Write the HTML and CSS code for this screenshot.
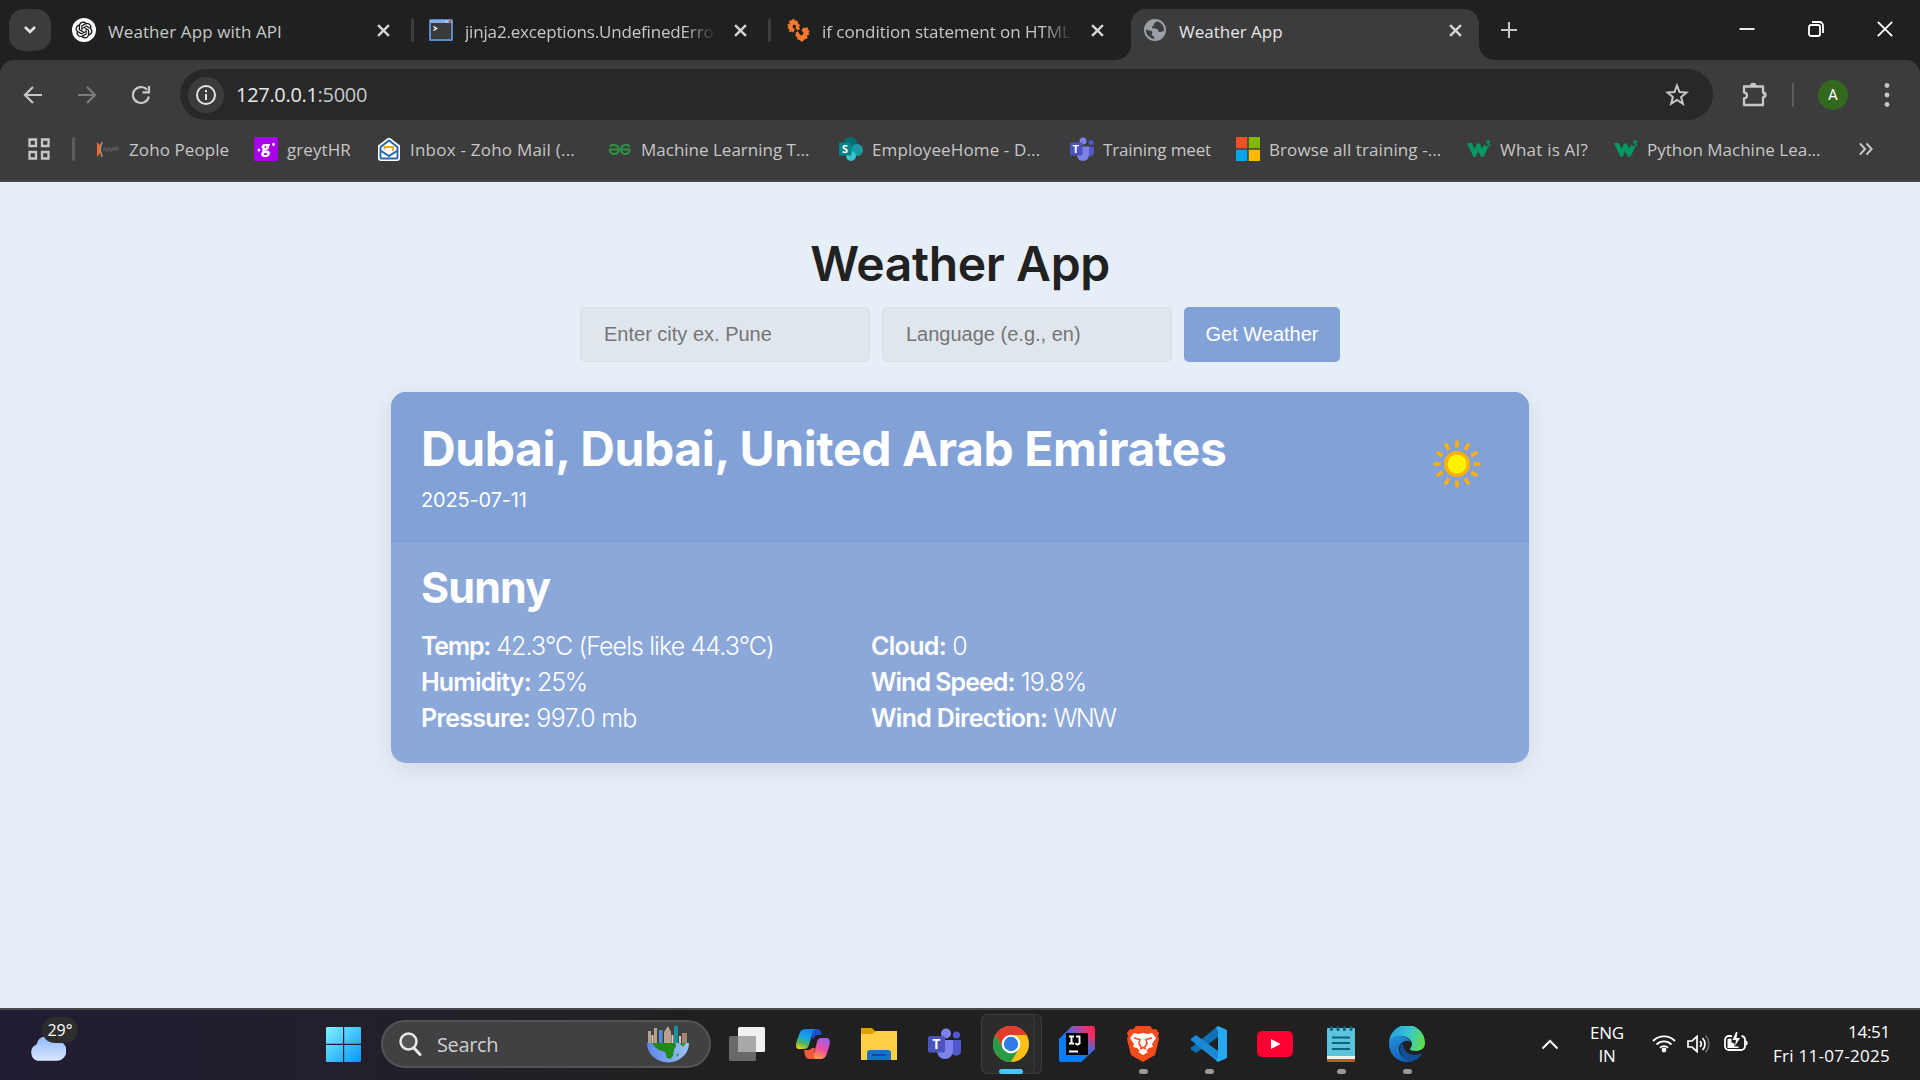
FILE: index.html
```html
<!DOCTYPE html>
<html lang="en">
<head>
<meta charset="utf-8">
<title>Weather App</title>
<link rel="stylesheet" href="styles.css">
</head>
<body>
<div class="tabstrip">
  <div class="tab-search"><svg width="16" height="16" viewBox="0 0 16 16"><path d="M3 5l5 5 5-5" fill="none" stroke="#e3e3e3" stroke-width="2.6"/></svg></div>
  <div class="tab">
    <svg class="fav" viewBox="0 0 24 24"><circle cx="12" cy="12" r="12" fill="#fff"/><path transform="translate(3.600 3.600) scale(.7)" fill="#111" stroke="#111" stroke-width=".3" d="M22.2819 9.8211a5.9847 5.9847 0 0 0-.5157-4.9108 6.0462 6.0462 0 0 0-6.5098-2.9A6.0651 6.0651 0 0 0 4.9807 4.1818a5.9847 5.9847 0 0 0-3.9977 2.9 6.0462 6.0462 0 0 0 .7427 7.0966 5.98 5.98 0 0 0 .511 4.9107 6.051 6.051 0 0 0 6.5146 2.9001A5.9847 5.9847 0 0 0 13.2599 24a6.0557 6.0557 0 0 0 5.7718-4.2058 5.9894 5.9894 0 0 0 3.9977-2.9001 6.0557 6.0557 0 0 0-.7475-7.0729zm-9.022 12.6081a4.4755 4.4755 0 0 1-2.8764-1.0408l.1419-.0804 4.7783-2.7582a.7948.7948 0 0 0 .3927-.6813v-6.7369l2.02 1.1686a.071.071 0 0 1 .038.052v5.5826a4.504 4.504 0 0 1-4.4945 4.4944zm-9.6607-4.1254a4.4708 4.4708 0 0 1-.5346-3.0137l.142.0852 4.783 2.7582a.7712.7712 0 0 0 .7806 0l5.8428-3.3685v2.3324a.0804.0804 0 0 1-.0332.0615L9.74 19.9502a4.4992 4.4992 0 0 1-6.1408-1.6464zM2.3408 7.8956a4.485 4.485 0 0 1 2.3655-1.9728V11.6a.7664.7664 0 0 0 .3879.6765l5.8144 3.3543-2.0201 1.1685a.0757.0757 0 0 1-.071 0l-4.8303-2.7865A4.504 4.504 0 0 1 2.3408 7.872zm16.5963 3.8558L13.1038 8.364 15.1192 7.2a.0757.0757 0 0 1 .071 0l4.8303 2.7913a4.4944 4.4944 0 0 1-.6765 8.1042v-5.6772a.79.79 0 0 0-.407-.667zm2.0107-3.0231l-.142-.0852-4.7735-2.7818a.7759.7759 0 0 0-.7854 0L9.409 9.2297V6.8974a.0662.0662 0 0 1 .0284-.0615l4.8303-2.7866a4.4992 4.4992 0 0 1 6.6802 4.66zM8.3065 12.863l-2.02-1.1638a.0804.0804 0 0 1-.038-.0567V6.0742a4.4992 4.4992 0 0 1 7.3757-3.4537l-.142.0805L8.704 5.459a.7948.7948 0 0 0-.3927.6813zm1.0976-2.3654l2.602-1.4998 2.6069 1.4998v2.9994l-2.5974 1.4997-2.6067-1.4997Z"/></svg>
    <span class="tab-title"><span class="t1">Weather App with API</span></span>
    <svg class="x" viewBox="0 0 12 12"><path d="M1 1l10 10M11 1L1 11"/></svg>
  </div>
  <div class="tab">
    <svg class="fav" viewBox="0 0 24 24"><rect y="1" width="24" height="22" rx="1.500" fill="#5d88c9"/><rect x="1" y="2" width="22" height="3" fill="#86aee6"/><circle cx="21" cy="3.500" r="1.200" fill="#e3382c"/><circle cx="17.500" cy="3.500" r="1" fill="#d8e6fa"/><rect x="2" y="5" width="20" height="16" fill="#3a3a3a"/><path d="M4.500 8.500l3 2-3 2" fill="none" stroke="#fff" stroke-width="1.500"/></svg>
    <span class="tab-title fade"><span class="t2">jinja2.exceptions.UndefinedErro</span></span>
    <svg class="x" viewBox="0 0 12 12"><path d="M1 1l10 10M11 1L1 11"/></svg>
  </div>
  <div class="tab last">
    <svg class="fav" viewBox="0 0 24 24" fill="#f8792b"><path d="M6 2l1.500-1.500L9 2.500l2.500.5.5 2.500 2 1.500-1 2 1 2-2.500 1.500-2-2.500.5-2.500L8 6.500 6.500 8l.5 2 2 1.500L7 14.500l-1.500-1-2.500.5.5-2.500-2-1.500 1-1.500L1 6.500 3.500 6l-.5-3z"/><path d="M17 23l-1.500 1-1.500-2-2.500-.5-.5-2.500-2-1.500 1-1.500-.5-1.500 2.500-1 1.500 2.500 1.500 1.500 2-1 .5-2-2-2 2-3 2 .5 2-1 .5 2.500 1.500 1.500-1 1.500 1 2-2.500 1 .5 3-2.500.5z"/></svg>
    <span class="tab-title fade"><span class="t3">if condition statement on HTML</span></span>
    <svg class="x" viewBox="0 0 12 12"><path d="M1 1l10 10M11 1L1 11"/></svg>
  </div>
  <div class="tab active">
    <svg class="fav" viewBox="0 0 24 24"><circle cx="12" cy="12" r="11" fill="#9aa0a6"/><path d="M14.500 3.200c-1 1-3.500 1-3.500 3s-2 1.800-2.200 3.300c0 1.500 3.700.8 5.200 1.500 2 1 .5 2.500 2.500 3 1.500.3 2.500-1 4.500-1a9.300 9.300 0 0 0-6.500-9.800zM3 11c1.500 1.800 5 1.200 6 2.500 1 1.500-.8 2 0 3.500.6 1 2.500 1 2.500 4A9.200 9.200 0 0 1 3 11z" fill="#3c3c3c"/></svg>
    <span class="tab-title"><span>Weather App</span></span>
    <svg class="x" viewBox="0 0 12 12"><path d="M1 1l10 10M11 1L1 11"/></svg>
  </div>
  <svg class="plus" viewBox="0 0 16 16"><path d="M8 0v16M0 8h16"/></svg>
  <div class="winctl">
    <svg width="16" height="16" viewBox="0 0 16 16"><path d="M0.500 8h15"/></svg>
    <svg width="16" height="16" viewBox="0 0 16 16"><rect x="1" y="4" width="11" height="11" rx="2"/><path d="M4 1h7.500a3.500 3.500 0 0 1 3.500 3.500V12"/></svg>
    <svg width="16" height="16" viewBox="0 0 16 16"><path d="M.8.8l14.400 14.400M15.200.8L.8 15.200"/></svg>
  </div>
</div>
<div class="toolbar">
  <div class="nav">
    <svg width="20" height="20" viewBox="0 0 20 20" stroke="#c7c7c7"><path d="M19 10H2M10 2l-8 8 8 8"/></svg>
    <svg width="20" height="20" viewBox="0 0 20 20" stroke="#7c7c7c"><path d="M1 10h17M10 2l8 8-8 8"/></svg>
    <svg width="20" height="20" viewBox="0 0 20 20" stroke="#c7c7c7"><path d="M17.800 11.500A8 8 0 1 1 16 4.800M18 1v6.300h-6.500"/></svg>
  </div>
  <div class="omnibox">
    <div class="info"><svg width="20" height="20" viewBox="0 0 20 20"><circle cx="10" cy="10" r="9" fill="none" stroke="#e3e3e3" stroke-width="2"/><path d="M10 9v6M10 5v2.200" stroke="#e3e3e3" stroke-width="2"/></svg></div>
    <span class="url">127.0.0.1<span class="port">:5000</span></span>
    <svg class="star" viewBox="0 0 24 24"><path d="M12 2.500l2.500 6.500 7 .5-5.400 4.500 1.800 6.800L12 17l-5.900 3.800L7.900 14 2.500 9.500l7-.5z"/></svg>
  </div>
  <svg class="ext" viewBox="0 0 26 26"><path d="M3 4.500h19v6a2.500 2.500 0 0 1 0 5V23H3v-6.500c4-.5 4-5.500 0-6z" fill="none" stroke="#c7c7c7" stroke-width="2.300" stroke-linejoin="round"/><path d="M9 4a3.200 3.200 0 0 1 6.400 0zM22.500 10a3.200 3.200 0 0 1 0 6.200z" fill="#c7c7c7"/></svg>
  <i class="tsep"></i>
  <div class="avatar">A</div>
  <svg class="dots" viewBox="0 0 6 24" fill="#c7c7c7"><circle cx="3" cy="2.500" r="2.400"/><circle cx="3" cy="12" r="2.400"/><circle cx="3" cy="21.500" r="2.400"/></svg>
</div>
<div class="bookmarks">
  <svg width="22" height="22" viewBox="0 0 22 22" fill="none" stroke="#c7c7c7" stroke-width="2.300"><path d="M1.500 1.500h6.500v6.500H1.500zM14 1.500h6.500v6.500H14zM1.500 14h6.500v6.500H1.500zM14 14h6.500v6.500H14z"/></svg>
  <i class="bsep"></i>
  <div class="bm"><svg viewBox="0 0 24 24"><path d="M1 5l4 4v6l-4 5z" fill="#f06a2a"/><path d="M6 5L4 12l2 8" fill="none" stroke="#a58f84" stroke-width="1.500"/><path d="M7 13l2-2 2 3 2-3 2 3 2-3 1 2 2-3 1 3 2-3" fill="none" stroke="#5c5856" stroke-width="1.800"/></svg><span class="w1">Zoho People</span></div>
  <div class="bm"><svg viewBox="0 0 24 24"><path fill="#a800e8" d="M0 0h24v24H0z"/><circle cx="5" cy="13" r="1.500" fill="#fff"/><circle cx="19.500" cy="7.500" r="1.400" fill="#fff"/><text x="7" y="16" class="gg">g</text></svg><span class="w1">greytHR</span></div>
  <div class="bm"><svg viewBox="0 0 24 24"><path d="M1 8.500L10.500 1.300a2.500 2.500 0 0 1 3 0L23 8.500V21a3 3 0 0 1-3 3H4a3 3 0 0 1-3-3z" fill="#fff"/><path d="M3.500 10L12 3.500 20.500 10v10.500a1 1 0 0 1-1 1h-15a1 1 0 0 1-1-1zM3.500 13.500L12 19l8.500-5.500" fill="none" stroke="#2565ae" stroke-width="1.900"/><path d="M7.500 12.500V10H16v4" fill="none" stroke="#f5a71b" stroke-width="1.900"/></svg><span class="w2">Inbox - Zoho Mail (...</span></div>
  <div class="bm"><svg viewBox="0 0 24 24" fill="none" stroke="#2f9044" stroke-width="2.200"><path d="M2 9.500c1.500-2.500 8.500-2.500 8.500 3 0 6-8.500 6-8.500 0h19.500c0 6-8.500 6-8.500 0 0-5.500 7-5.500 8.500-3"/></svg><span>Machine Learning T...</span></div>
  <div class="bm"><svg viewBox="0 0 24 24"><circle cx="11.500" cy="7" r="7" fill="#036c70"/><circle cx="18" cy="13" r="6" fill="#1a9ba1"/><circle cx="12" cy="19" r="5" fill="#37c6d0"/><rect y="5.500" width="12.500" height="13" rx="1" fill="#038387"/><text x="3" y="16" class="ic">S</text></svg><span class="w3">EmployeeHome - D...</span></div>
  <div class="bm"><svg viewBox="0 0 24 24"><circle cx="21" cy="5.500" r="2.500" fill="#5059c9"/><circle cx="13" cy="4" r="3.500" fill="#7b83eb"/><path d="M17 9.500h7v6.500a4 4 0 0 1-7 2z" fill="#5059c9"/><path d="M7 9.500h12v8.500a6 6 0 0 1-12 0z" fill="#7b83eb"/><rect y="5.500" width="12.500" height="13" rx="1" fill="#4b53bc"/><text x="2.500" y="16" class="ic">T</text></svg><span class="w4">Training meet</span></div>
  <div class="bm"><svg viewBox="0 0 24 24"><path fill="#f25022" d="M0 0h11.300v11.300H0z"/><path fill="#7fba00" d="M12.700 0H24v11.300H12.700z"/><path fill="#00a4ef" d="M0 12.700h11.300V24H0z"/><path fill="#ffb900" d="M12.700 12.700H24V24H12.700z"/></svg><span class="w1">Browse all training -...</span></div>
  <div class="bm"><svg viewBox="0 0 24 24"><path d="M0 6h5l2.500 6L10 6.500h3L15 12l2-4.500 2 2 2 1-4.500 9.500h-2L11 14.500 8.500 20h-2z" fill="#059862"/><path d="M19 4.500h3.500l-2 2.200c3-.3 3 3.300-1.500 2.800" fill="none" stroke="#059862" stroke-width="1.300"/></svg><span class="w2">What is AI?</span></div>
  <div class="bm"><svg viewBox="0 0 24 24"><path d="M0 6h5l2.500 6L10 6.500h3L15 12l2-4.500 2 2 2 1-4.500 9.500h-2L11 14.500 8.500 20h-2z" fill="#059862"/><path d="M19 4.500h3.500l-2 2.200c3-.3 3 3.300-1.500 2.800" fill="none" stroke="#059862" stroke-width="1.300"/></svg><span>Python Machine Lea...</span></div>
  <svg width="14" height="14" viewBox="0 0 15 14" fill="none" stroke="#c7c7c7" stroke-width="2.200"><path d="M1 1l5.500 6L1 13M8 1l5.500 6L8 13"/></svg>
</div>
<main>
  <h1>Weather App</h1>
  <form>
    <input type="text" placeholder="Enter city ex. Pune">
    <input type="text" placeholder="Language (e.g., en)">
    <button type="button">Get Weather</button>
  </form>
  <section class="card">
    <header>
      <div>
        <h2>Dubai, Dubai, United Arab Emirates</h2>
        <p>2025-07-11</p>
      </div>
      <svg class="sun" viewBox="-40 -40 80 80"><circle r="13" fill="#ffb000"/><circle r="9.500" fill="#fff200"/><g stroke="#ffb000" stroke-width="3.600"><path id="ry" d="M0-16.500V-23.500M0 16.500V23.500"/><use href="#ry" transform="rotate(30)"/><use href="#ry" transform="rotate(60)"/><use href="#ry" transform="rotate(90)"/><use href="#ry" transform="rotate(120)"/><use href="#ry" transform="rotate(150)"/></g></svg>
    </header>
    <div class="body">
      <h3>Sunny</h3>
      <div class="facts">
        <p><b class="temp">Temp:</b> <span class="feels">42.3°C (Feels like 44.3°C)</span></p>
        <p><b>Cloud:</b> <span>0</span></p>
        <p><b class="hum">Humidity:</b> <span class="pct">25%</span></p>
        <p><b class="speed">Wind Speed:</b> <span>19.8%</span></p>
        <p><b>Pressure:</b> <span>997.0 mb</span></p>
        <p><b>Wind Direction:</b> <span class="dir">WNW</span></p>
      </div>
    </div>
  </section>
</main>
<footer class="taskbar">
  <div class="weather">
    <svg width="38" height="31" viewBox="0 0 40 32"><defs><linearGradient id="cl" x2="0" y2="1"><stop offset="0" stop-color="#8fb8fa"/><stop offset="1" stop-color="#dbe7fb"/></linearGradient></defs><circle cx="29" cy="8" r="8" fill="#f7630c"/><path d="M10 31a9 9 0 0 1-1-17 11 11 0 0 1 20-4 10.500 10.500 0 0 1 2 21z" fill="url(#cl)"/></svg>
    <span class="badge">29°</span>
  </div>
  <svg class="start" viewBox="0 0 35 35"><defs><linearGradient id="wn" x2="1" y2="1"><stop offset="0" stop-color="#7df3ff"/><stop offset="1" stop-color="#0a94fb"/></linearGradient></defs><path d="M1 0h16v16.800H0V1a1 1 0 0 1 1-1zM18.200 0H34a1 1 0 0 1 1 1v15.800H18.200zM0 18h17v17H1a1 1 0 0 1-1-1zM18.200 18H35v16a1 1 0 0 1-1 1H18.200z" fill="url(#wn)"/></svg>
  <div class="search">
    <svg width="24" height="24" viewBox="0 0 24 24"><circle cx="10.500" cy="9.500" r="8" fill="#555" stroke="#e8e8e8" stroke-width="2.500"/><path d="M16 16l6 6.500" stroke="#e8e8e8" stroke-width="3" stroke-linecap="round"/></svg>
    <span class="q">Search</span>
    <svg class="globe" width="42" height="38" viewBox="0 0 42 38"><defs><linearGradient id="oc" x2="1"><stop offset="0" stop-color="#5b86e8"/><stop offset="1" stop-color="#9cc4f8"/></linearGradient></defs><path d="M0 18h42a21 19.500 0 0 1-42 0z" fill="url(#oc)"/><path d="M5 18h23c2 2 1 4-1 6l-1 7-3 3-3-1-2-6-6-2-4-3z" fill="#1f8a17"/><path d="M29 30l3-2-1 4zM32 18h7l-3 4-2-2z" fill="#27952a"/><path d="M1 6h3v12H1zM7 3h3v15H7zM17 7l4-6 3 6v11h-7z" fill="#b9a08a"/><path d="M12 5h3.500v13H12z" fill="#4f8fe0"/><path d="M27 2l2-2 2 2v16h-4z" fill="#18919c"/><path d="M35 8h5v10h-5z" fill="#a98570"/><path d="M4.500 10h2v8h-2zM24.500 10h2v8h-2zM32 11h2v7h-2z" fill="#d8cabb"/></svg>
  </div>
  <div class="apps">
    <div class="app"><svg viewBox="0 0 36 36"><rect x="9" y="1" width="27" height="25" rx="1.500" fill="#f1f1f1"/><rect y="10" width="27" height="25" rx="1.500" fill="#707070" opacity=".92"/><path d="M9 10h18v16H9z" fill="#a9a9a9"/></svg></div>
    <div class="app"><svg viewBox="0 0 36 36"><defs><linearGradient id="ca" x1=".6" x2=".2" y2="1"><stop offset="0" stop-color="#1b7fe0"/><stop offset=".4" stop-color="#12a5ee"/><stop offset=".7" stop-color="#4cb45c"/><stop offset="1" stop-color="#f3cf1d"/></linearGradient><linearGradient id="cb" x1=".7" x2=".3" y2="1"><stop offset="0" stop-color="#9c62ee"/><stop offset=".5" stop-color="#ec4c9c"/><stop offset="1" stop-color="#ffa146"/></linearGradient></defs><path d="M14 3h8c3 0 4 2 5 6h-4c-3 0-4 2-5 5z" fill="#1b4fc9"/><path d="M11 3h10c-3 1-4 5-5 9l-2 7c-1 3-3 4-6 4H4c-4 0-3-5-2-9l2-5c1-4 3-6 7-6z" fill="url(#ca)"/><path d="M25 33H15c3-1 4-5 5-9l2-8c1-4 3-4 6-4h3c5 0 4 5 3 9l-2 6c-1 4-3 6-7 6z" fill="url(#cb)"/><path d="M20 33h-6c-3 0-4-3-5-9h4c2 0 3-1 4-2h3c-1 4-2 7 0 11z" fill="#f4563e"/></svg></div>
    <div class="app"><svg viewBox="0 0 36 36"><path d="M0 2h11l4 4v4H0z" fill="#dea003"/><path d="M0 8h11l4-3h21v29H0z" fill="#ffcf45"/><path d="M6 34V27a3 3 0 0 1 3-3h18a3 3 0 0 1 3 3v7z" fill="#0f74c4"/><path d="M11 29h14" stroke="#084a86" stroke-width="1.600"/></svg></div>
    <div class="app"><svg viewBox="0 0 36 36"><circle cx="29.500" cy="9" r="3.600" fill="#5059c9"/><circle cx="19" cy="7.500" r="5" fill="#7b83eb"/><path d="M24 14h10v9a5 5 0 0 1-10 3z" fill="#5059c9"/><path d="M10 14h16v11a8 8 0 0 1-16 0z" fill="#7b83eb"/><rect x="1" y="10" width="17" height="16.500" rx="1.500" fill="#4b53bc"/><text x="5.200" y="23" class="tt">T</text></svg></div>
    <div class="app current"><svg viewBox="0 0 36 36"><circle cx="18" cy="18" r="18" fill="#fbc116"/><path d="M18 9h15.600A18 18 0 0 0 2.400 9l7.800 13.500z" fill="#e33b2e"/><path d="M2.400 9a18 18 0 0 0 15.600 27l7.800-13.500H10.200z" fill="#2a9a48"/><circle cx="18" cy="18" r="9.300" fill="#fff"/><circle cx="18" cy="18" r="7.200" fill="#2f7bea"/></svg></div>
    <div class="app"><svg viewBox="0 0 36 36"><defs><linearGradient id="ij" x1="0" x2="1" y1=".6" y2=".1"><stop offset=".2" stop-color="#087cfa"/><stop offset=".6" stop-color="#a24bb5"/><stop offset=".9" stop-color="#fe2857"/></linearGradient><linearGradient id="ik" x1="0" x2="0" y2="1"><stop offset=".3" stop-color="#087cfa" stop-opacity="0"/><stop offset=".9" stop-color="#087cfa"/></linearGradient></defs><path d="M13 0h20a3 3 0 0 1 3 3v20L22 36H3a3 3 0 0 1-3-3V13z" fill="url(#ij)"/><path d="M13 0h20a3 3 0 0 1 3 3v20L22 36H3a3 3 0 0 1-3-3V13z" fill="url(#ik)"/><path d="M7 7h22v22H7z"/><path d="M10 10.500h5M12.500 10.500v7M10 17.500h5M17 10.500h3.500v5a2 2 0 0 1-4 1.500M10 25.500h9" fill="none" stroke="#fff" stroke-width="1.900"/></svg></div>
    <div class="app run"><svg viewBox="0 0 36 36"><path d="M11 0h14l3 3.500 3-.5 3 4-1 3 1 3-4 16-12 7-12-7L2 13l1-3-1-3 3-4 3 .5z" fill="#fb4a1a"/><path d="M9 7l4 1 5-1 5 1 4-1 4 5-4 6 1 3-4 1-3 3 2 1-5 3-5-3 2-1-3-3-4-1 1-3-4-6z" fill="#fff"/><path d="M9 12l6 1.500-1 4 2.500 4M27 12l-6 1.500 1 4-2.500 4M15 23l3-1.500 3 1.500" fill="none" stroke="#fb4a1a" stroke-width="1.600"/></svg></div>
    <div class="app run"><svg viewBox="0 0 36 36"><path d="M27 0v11L5 27l-4-3a1.500 1.500 0 0 1 0-3z" fill="#0f70b3"/><path d="M27 36V25L5 9l-4 3a1.500 1.500 0 0 0 0 3z" fill="#1a8ad4"/><path d="M27 0l9 4v28l-9 4-2-2 2-3V5l-2-3z" fill="#29a8f2"/></svg></div>
    <div class="app"><svg viewBox="0 0 36 36"><rect y="5" width="36" height="26" rx="5" fill="#ff0033"/><path d="M14 13l9.500 5-9.500 5z" fill="#fff"/></svg></div>
    <div class="app run"><svg viewBox="0 0 36 36"><rect x="4" y="26" width="28" height="10" rx="1" fill="#b85c12"/><path d="M4 27h28v6H4z" fill="#f1f1f1"/><rect x="4" y="2" width="28" height="28" rx="1" fill="#5cc3dc"/><path d="M9 11.500h18M9 17h18M9 23h18" stroke="#0d6280" stroke-width="1.900"/><path d="M8.500 1.500v2M15 1.500v2M21.500 1.500v2M28 1.500v2" stroke="#0d6280" stroke-width="3" stroke-linecap="round"/></svg></div>
    <div class="app run"><svg viewBox="0 0 36 36"><defs><linearGradient id="ea" y1=".3" x2="1" y2=".5"><stop offset="0" stop-color="#1e9ee0"/><stop offset=".5" stop-color="#35c5d8"/><stop offset="1" stop-color="#62dc4e"/></linearGradient><linearGradient id="eb" x2=".4" y2="1"><stop offset="0" stop-color="#2492dc"/><stop offset="1" stop-color="#1363b8"/></linearGradient></defs><path d="M0 17A18 18 0 0 1 36 17c0 6-5 8-9 8-4 0-6-1-6-2s2-2 2-5c0-4-5-8-11-8C6 10 1 13 0 17z" fill="url(#ea)"/><path d="M0 18c0-6 7-9 12-8 6 1 9 4 10 6-6-4-13 2-12 8 1 7 7 11 14 11A18 18 0 0 1 0 18z" fill="url(#eb)"/><path d="M14 17c-5 3-4 13 5 19 5 0 11-3 14-8 0-1-1-1-2 0-8 3-17-1-17-11z" fill="#0f4f96"/></svg></div>
  </div>
  <div class="tray">
    <svg width="18" height="11" viewBox="0 0 18 11"><path d="M1.500 9.500L9 2l7.500 7.500" fill="none" stroke="#fff" stroke-width="2"/></svg>
    <div class="lang">ENG<br>IN</div>
    <svg width="24" height="20" viewBox="0 0 24 20" fill="none" stroke="#fff" stroke-width="1.800"><path d="M1 7a15.500 15.500 0 0 1 22 0M4.500 10.500a10.600 10.600 0 0 1 15 0M8 13.800a5.700 5.700 0 0 1 8 0"/><circle cx="12" cy="16" r="1.500" fill="#fff"/></svg>
    <svg width="24" height="20" viewBox="0 0 24 20" fill="none" stroke="#fff" stroke-width="1.700"><path d="M1 7h4l5-4.500v15L5 13H1zM13 7a4.500 4.500 0 0 1 0 6M15.500 4a8.500 8.500 0 0 1 0 12"/><path d="M18.500 1.500a12.500 12.500 0 0 1 0 17" stroke="#666"/></svg>
    <svg class="batt" width="24" height="21" viewBox="0 0 24 21"><path d="M8 4H5a4 4 0 0 0-4 4v6a4 4 0 0 0 4 4h12a4 4 0 0 0 4-4V8a4 4 0 0 0-3.500-4" fill="none" stroke="#fff" stroke-width="1.800"/><path d="M3.500 7l4-.5v4l3 1v3h4v1.500h-11zM12 0L8.500 8H12l-1 6 5-8h-3.500l1-6zM22 8.500l1.500 1v3l-1.500 1z" fill="#fff"/></svg>
    <div class="clock"><span class="time">14:51</span><br><span class="date">Fri 11-07-2025</span></div>
  </div>
</footer>
</body>
</html>
```
FILE: styles.css
```css
* { box-sizing: border-box; margin: 0; padding: 0; }
body { width: 1920px; height: 1080px; overflow: hidden; display: flex; flex-direction: column; background: #1f2121; font-family: "Open Sans", sans-serif; color: #c7c7c7; }
svg { display: block; flex: none; }

.tabstrip { height: 60px; display: flex; padding-left: 9px; background: #1f2121; font-size: 17px; }
.tab-search { width: 42px; height: 42px; margin-top: 9px; margin-right: 4px; border-radius: 15px; background: #3c3c3c; display: grid; place-items: center; }
.tab { position: relative; width: 357px; height: 42px; margin-top: 9px; padding: 0 22px 0 17px; display: flex; align-items: center; }
.tab:not(.active):not(.last)::after { content: ""; position: absolute; right: -2px; top: 9px; width: 3px; height: 24px; border-radius: 2px; background: #3c3c3c; }
.tab.last { width: 349px; padding-right: 14px; }
.tab .fav { width: 24px; height: 24px; margin-right: 12px; }
.tab-title { flex: 1; white-space: nowrap; padding-top: 3px; margin-right: 20px; }
.t1 { letter-spacing: .09px; }
.t2 { letter-spacing: -.17px; }
.t3 { letter-spacing: -.03px; }
.fade { -webkit-mask-image: linear-gradient(90deg, #000 88%, transparent 101%); mask-image: linear-gradient(90deg, #000 88%, transparent 101%); }
.x { width: 13px; height: 13px; fill: none; stroke: #d6d6d6; stroke-width: 2.2; }
.tab.active { width: 348px; height: 51px; margin-left: 13px; padding: 0 17px 9px 12px; background: #3c3c3c; border-radius: 15px 15px 0 0; color: #e6e6e6; }
.tab.active::before, .tab.active::after { content: ""; position: absolute; bottom: 0; width: 15px; height: 15px; }
.tab.active::before { left: -15px; background: radial-gradient(circle at 0 0, transparent 14.5px, #3c3c3c 15px); }
.tab.active::after { right: -15px; background: radial-gradient(circle at 100% 0, transparent 14.5px, #3c3c3c 15px); }
.plus { width: 16px; height: 16px; margin: 22px 0 0 22px; stroke: #c7c7c7; stroke-width: 2; }
.winctl { margin-left: auto; padding: 21px 27px 0 0; display: flex; gap: 53px; fill: none; stroke: #fff; stroke-width: 1.8; }

.toolbar { height: 69px; display: flex; align-items: center; background: #3c3c3c; border-radius: 14px 14px 0 0; }
.nav { width: 180px; padding-left: 23px; display: flex; gap: 34px; fill: none; stroke-width: 2.2; }
.omnibox { width: 1533px; height: 51px; display: flex; align-items: center; padding: 0 24px 0 8px; background: #282828; border-radius: 26px; }
.info { width: 36px; height: 36px; margin-right: 12px; border-radius: 50%; background: #3c3c3c; display: grid; place-items: center; }
.url { font-size: 20px; letter-spacing: -.31px; color: #e8e8e8; }
.port { color: #c7c7c7; }
.star { width: 24px; height: 24px; margin-left: auto; fill: none; stroke: #c7c7c7; stroke-width: 2; }
.ext { width: 26px; height: 26px; margin-left: 28px; }
.tsep { width: 2px; height: 24px; margin-left: 25px; background: #5c5c5c; }
.avatar { width: 30px; height: 30px; margin-left: 24px; border-radius: 50%; background: #33691e; color: #fff; font: 15px/31px Roboto, sans-serif; text-align: center; }
.dots { width: 6px; height: 24px; margin-left: 36px; }

.bookmarks { height: 53px; padding: 0 0 11px 28px; display: grid; grid-template-columns: 44px 24px 158px 123px 231px 231px 231px 166px 231px 147px 245px 1fr; align-items: center; background: #3c3c3c; border-bottom: 2px solid #454545; font-size: 17px; }
.bsep { width: 3px; height: 24px; border-radius: 2px; background: #5c5c5c; }
.bm { display: flex; align-items: center; gap: 9px; white-space: nowrap; }
.bm svg { width: 24px; height: 24px; }
.w1 { letter-spacing: .09px; }
.w2 { letter-spacing: .22px; }
.w3 { letter-spacing: .13px; }
.w4 { letter-spacing: -.13px; }
.gg { font: 800 15px "Open Sans", sans-serif; fill: #fff; }
.ic { font: bold 11px "Open Sans", sans-serif; fill: #fff; }
.tt { font: bold 14px "Open Sans", sans-serif; fill: #fff; }

main { height: 826px; background: #e6eef8; color: #fff; font-family: Inter, sans-serif; }
h1 { height: 125px; padding-top: 53px; text-align: center; font-size: 48px; line-height: 58px; font-weight: 600; letter-spacing: -.38px; color: #212121; }
form { display: flex; justify-content: center; gap: 12px; margin-bottom: 30px; }
input { width: 290px; height: 55px; padding: 0 23px; border: 1px solid #dedede; border-radius: 6px; background: #dfe6ee; font: 20px "Liberation Sans", Arial, sans-serif; }
input::placeholder { color: #757575; }
button { width: 156px; height: 55px; border: 0; border-radius: 5px; background: #81a1d7; color: #fff; font: 20px "Liberation Sans", Arial, sans-serif; }
.card { width: 1138px; height: 371px; margin: 0 auto; border-radius: 15px; overflow: hidden; background: #8ba8d9; box-shadow: 0 5px 25px rgba(0, 0, 0, .1); }
.card header { height: 151px; padding: 0 32px 0 30px; display: flex; justify-content: space-between; background: #81a1d7; }
h2 { margin-top: 28px; font-size: 48px; line-height: 58px; font-weight: 700; letter-spacing: -.4px; }
.card header p { margin-top: 10px; font-size: 20px; line-height: 24px; letter-spacing: -.16px; }
.sun { width: 80px; height: 80px; margin-top: 32px; }
.body { padding: 18px 30px; }
h3 { font-size: 43px; line-height: 52px; font-weight: 700; letter-spacing: -.9px; }
.facts { display: grid; grid-template-columns: 450px 1fr; margin-top: 14px; font-size: 25px; line-height: 38px; grid-auto-rows: 36px; font-weight: 300; letter-spacing: -.75px; }
.facts b { font-weight: 600; letter-spacing: -.68px; }
.facts .temp { letter-spacing: -1.3px; }
.facts .hum { letter-spacing: -.82px; }
.facts .speed { letter-spacing: -.98px; }
.pct { letter-spacing: -1.2px; }
.feels { letter-spacing: -.92px; }
.dir { letter-spacing: -2px; }

.taskbar { height: 72px; padding: 0 30px 2px 24px; display: flex; align-items: center; background: linear-gradient(90deg, #211c33, #231f2b 360px, #202020 700px); border-top: 2px solid #48484c; color: #fff; font-size: 17px; }
.weather { position: relative; width: 302px; height: 70px; padding: 22px 0 0 4px; }
.badge { position: absolute; left: 18px; top: 8px; width: 36px; height: 26px; border-radius: 13px; background: #2d2d2d; font-size: 16px; line-height: 26px; text-align: center; }
.start { width: 35px; height: 35px; margin-right: 20px; }
.search { width: 330px; height: 48px; padding: 0 20px 0 15px; display: flex; align-items: center; background: #414042; border: 2px solid #545356; border-radius: 24px; color: #cfcfcf; }
.q { margin: 0 0 0 15px; font-size: 20px; letter-spacing: -.35px; }
.globe { margin-left: auto; }
.apps { display: flex; margin-left: 3px; }
.app { position: relative; width: 66px; height: 60px; display: grid; place-items: center; }
.app svg { width: 36px; height: 36px; }
.current::before { content: ""; position: absolute; inset: 0 9px 0 3px; border: 1px solid #3c3c3c; border-radius: 6px; background: #2c2c2c; box-shadow: 7px 0 0 -1px #292929, 7px 0 0 0 #3a3a3a; }
.current svg { z-index: 1; }
.current::after, .run::after { content: ""; position: absolute; left: 21px; bottom: 0; width: 24px; height: 5px; border-radius: 3px; background: #4cc2ff; }
.run::after { left: 29px; width: 9px; background: #999; }
.tray { margin-left: auto; display: grid; grid-template-columns: 30px 84px 30px 40px 34px 137px; align-items: center; justify-items: center; line-height: 23px; }
.lang { text-align: center; letter-spacing: -.2px; }
.clock { justify-self: end; line-height: 24px; text-align: right; white-space: nowrap; }
.time { letter-spacing: -.27px; }
.date { letter-spacing: .27px; }
.batt { margin-top: -3px; }
```
